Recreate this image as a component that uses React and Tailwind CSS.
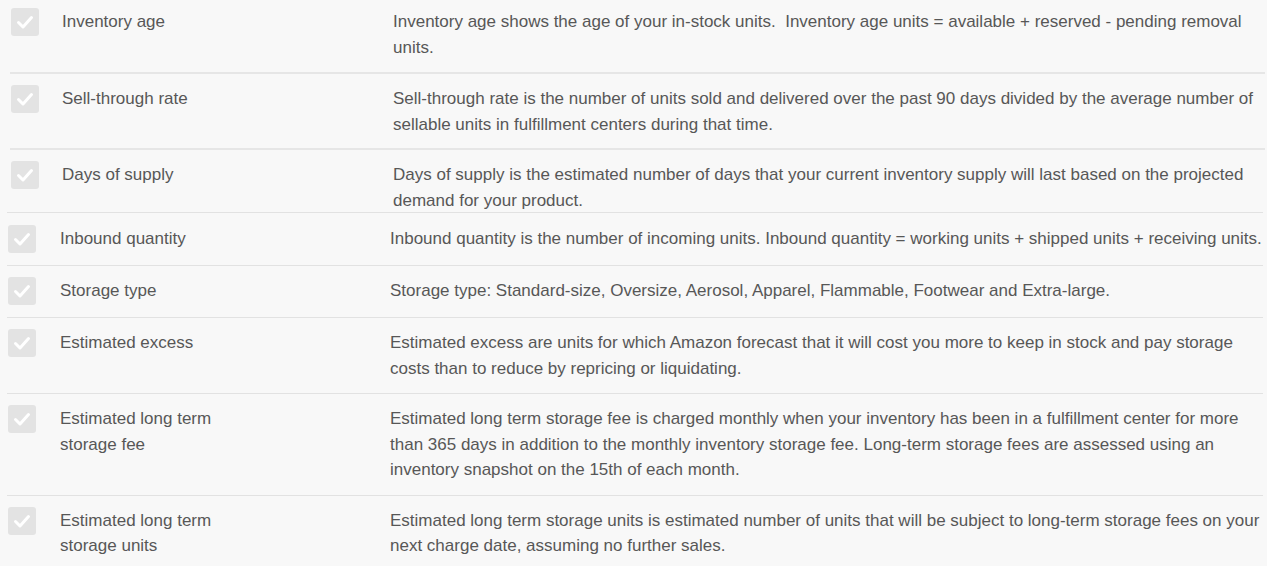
import React from "react";

const groupA = [
  {
    label: "Inventory age",
    desc: "Inventory age shows the age of your in-stock units.\u00a0 Inventory age units = available + reserved - pending removal units.",
  },
  {
    label: "Sell-through rate",
    desc: "Sell-through rate is the number of units sold and delivered over the past 90 days divided by the average number of sellable units in fulfillment centers during that time.",
  },
  {
    label: "Days of supply",
    desc: "Days of supply is the estimated number of days that your current inventory supply will last based on the projected demand for your product.",
  },
];

const groupB = [
  {
    label: "Inbound quantity",
    desc: "Inbound quantity is the number of incoming units. Inbound quantity = working units + shipped units + receiving units.",
  },
  {
    label: "Storage type",
    desc: "Storage type: Standard-size, Oversize, Aerosol, Apparel, Flammable, Footwear and Extra-large.",
  },
  {
    label: "Estimated excess",
    desc: "Estimated excess are units for which Amazon forecast that it will cost you more to keep in stock and pay storage costs than to reduce by repricing or liquidating.",
  },
  {
    label: "Estimated long term storage fee",
    desc: "Estimated long term storage fee is charged monthly when your inventory has been in a fulfillment center for more than 365 days in addition to the monthly inventory storage fee. Long-term storage fees are assessed using an inventory snapshot on the 15th of each month.",
  },
  {
    label: "Estimated long term storage units",
    desc: "Estimated long term storage units is estimated number of units that will be subject to long-term storage fees on your next charge date, assuming no further sales.",
  },
];

const padsA = [
  "pt-[9px] pb-[12px]",
  "pt-[12px] pb-[11px]",
  "pt-[12px] pb-0",
];

const padsB = [
  "pt-[13px] pb-[12px]",
  "pt-[12px] pb-[12px]",
  "pt-[12px] pb-[12px]",
  "pt-[12px] pb-[12px]",
  "pt-[12px] pb-[12px]",
];

function Check() {
  return (
    <div className="w-[28px] h-[28px] shrink-0 rounded-[3px] bg-[#e3e3e3] flex items-center justify-center -mt-[1px]">
      <svg width="28" height="28" viewBox="0 0 28 28">
        <polyline
          points="7.5,14.5 12,19 20.5,9.5"
          fill="none"
          stroke="#ffffff"
          strokeWidth="3"
          strokeLinecap="round"
          strokeLinejoin="round"
        />
      </svg>
    </div>
  );
}

function Row({ item, pads, labelGap, labelW }) {
  return (
    <div className={`flex items-start ${pads}`}>
      <div className="pl-[1px] shrink-0">
        <Check />
      </div>
      <div className={`${labelGap} ${labelW} shrink-0 pr-[150px]`}>{item.label}</div>
      <div className="flex-1 min-w-0">{item.desc}</div>
    </div>
  );
}

export default function App() {
  return (
    <div
      className="w-[1267px] h-[566px] overflow-hidden bg-[#f8f8f8] text-[#575757] text-[17px] leading-[25.5px]"
      style={{ fontFamily: '"Liberation Sans", Arial, sans-serif' }}
    >
      <div className="ml-[10px] w-[1255px] h-[212px] overflow-hidden">
        {groupA.map((item, i) => (
          <div key={i}>
            {i > 0 && <div className="h-[2px] bg-[#e6e6e6]" />}
            <Row item={item} pads={padsA[i]} labelGap="ml-[23px]" labelW="w-[331px]" />
          </div>
        ))}
      </div>
      <div className="ml-[7px] w-[1256px]">
        {groupB.map((item, i) => (
          <div key={i}>
            <div className="h-px bg-[#e2e2e2]" />
            <Row item={item} pads={padsB[i]} labelGap="ml-[24px]" labelW="w-[330px]" />
          </div>
        ))}
      </div>
    </div>
  );
}
